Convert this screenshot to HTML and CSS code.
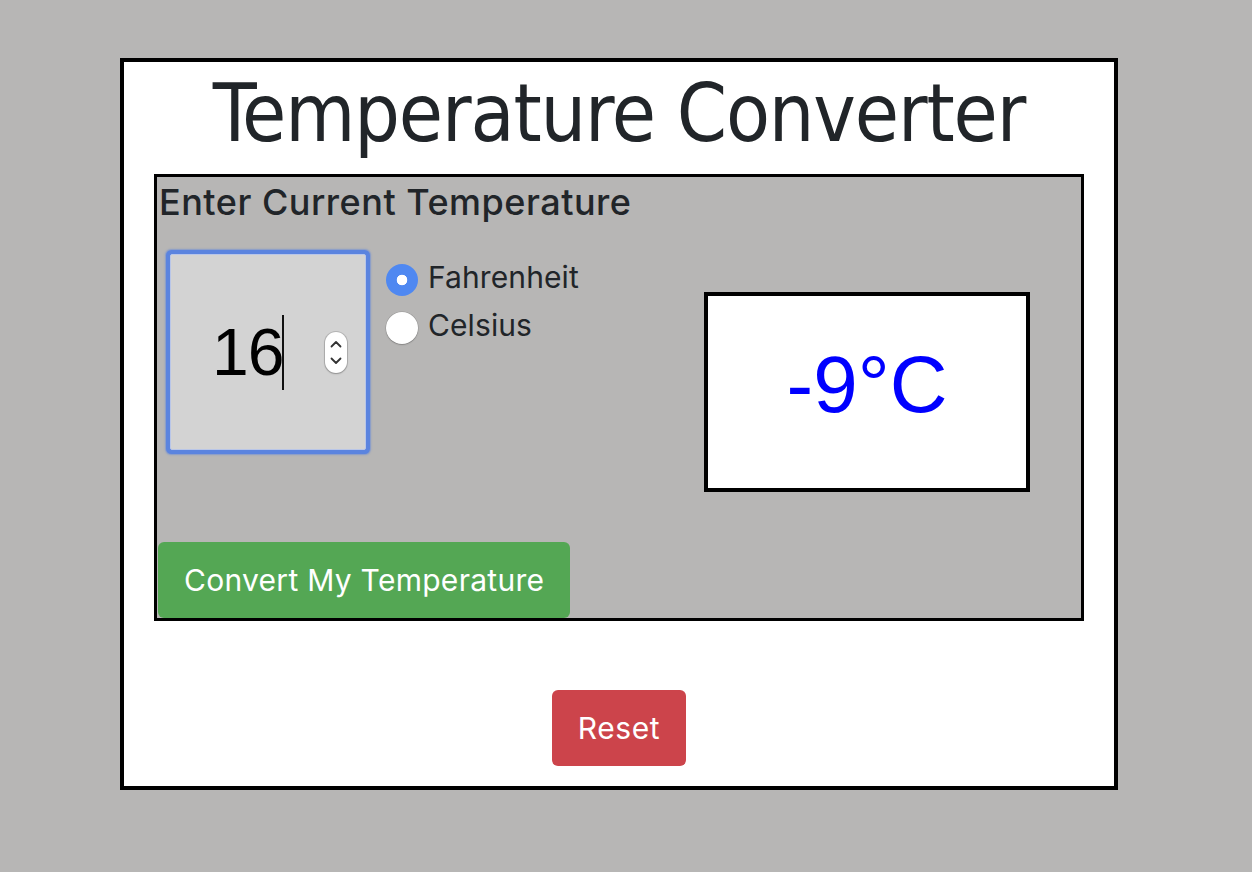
FILE: index.html
```html
<!DOCTYPE html>
<html lang="en">
<head>
<meta charset="utf-8">
<title>Temperature Converter</title>
<link rel="stylesheet" href="styles.css">
</head>
<body>
<main class="app">
  <h1 class="title">Temperature Converter</h1>
  <section class="panel">
    <h4 class="panel-title">Enter Current Temperature</h4>
    <div class="row">
      <div class="num">
        <span class="num-value">16</span><span class="caret"></span>
        <span class="spin">
          <svg width="22" height="41" viewBox="0 0 22 41" aria-hidden="true">
            <polyline points="6.5,14.5 11,10 15.5,14.5" fill="none" stroke="#333" stroke-width="1.8" stroke-linecap="round" stroke-linejoin="round"/>
            <polyline points="6.5,26.5 11,31 15.5,26.5" fill="none" stroke="#333" stroke-width="1.8" stroke-linecap="round" stroke-linejoin="round"/>
          </svg>
        </span>
      </div>
      <div class="radios">
        <label class="radio-opt"><input class="radio" type="radio" name="unit" checked><span class="radio-text">Fahrenheit</span></label>
        <label class="radio-opt"><input class="radio" type="radio" name="unit"><span class="radio-text">Celsius</span></label>
      </div>
      <div class="result">-9°C</div>
    </div>
    <button class="btn btn-convert" type="button">Convert My Temperature</button>
  </section>
  <div class="reset-row">
    <button class="btn btn-reset" type="button">Reset</button>
  </div>
</main>
</body>
</html>
```

FILE: styles.css
```css
html, body {
  margin: 0;
  background: #b7b6b5;
}

body {
  padding: 58px 0 0 120px;
  min-height: 872px;
  box-sizing: border-box;
  font-family: "Inter", "Roboto", sans-serif;
  color: #212529;
}

.app {
  width: 998px;
  height: 732px;
  box-sizing: border-box;
  border: 4px solid #000;
  background: #fff;
  display: flex;
  flex-direction: column;
}

.title {
  margin: 0 0 8px;
  font-family: "DejaVu Sans Condensed", "DejaVu Sans", sans-serif;
  font-weight: 400;
  font-size: 80px;
  letter-spacing: -1.1px;
  line-height: 104px;
  text-align: center;
  color: #212529;
}

.panel {
  margin: 0 30px;
  height: 447px;
  box-sizing: border-box;
  border: 3px solid #000;
  background: #b7b6b5;
  display: flex;
  flex-direction: column;
}

.panel-title {
  margin: 4px 0 0 2px;
  font-family: "Inter", sans-serif;
  font-weight: 500;
  font-size: 36px;
  line-height: 43px;
  letter-spacing: 0.5px;
  color: #212529;
}

.row {
  display: flex;
  align-items: flex-start;
  margin-top: 30px;
}

.num {
  margin-left: 13px;
  width: 196px;
  height: 196px;
  box-sizing: border-box;
  border: 1px solid #b9c6e8;
  border-radius: 2px;
  background: #d3d3d3;
  box-shadow: 0 0 0 4px #5b84df, 0 0 1.5px 5px rgba(91, 132, 223, 0.55);
  padding-left: 41px;
  display: flex;
  align-items: center;
}

.num-value {
  font-family: "Liberation Sans", Arial, sans-serif;
  font-size: 66px;
  letter-spacing: -1px;
  line-height: 1;
  color: #000;
}

.caret {
  margin-left: -1px;
  width: 2px;
  height: 75px;
  background: #111;
}

.spin {
  margin-left: 41px;
  width: 22px;
  height: 41px;
  border-radius: 11px;
  background: #fff;
  box-shadow: 0 0 0 1px rgba(0, 0, 0, 0.14), 0 1px 2px rgba(0, 0, 0, 0.22);
  display: flex;
}

.radios {
  margin-left: 20px;
  margin-top: 2px;
  display: flex;
  flex-direction: column;
}

.radio-opt {
  display: flex;
  align-items: center;
  gap: 10px;
  height: 48px;
  font-family: "Inter", sans-serif;
  font-size: 30px;
  color: #212529;
}

.radio-text {
  padding-bottom: 6px;
  letter-spacing: 0.1px;
}

.radio {
  -webkit-appearance: none;
  appearance: none;
  margin: 0;
  width: 32px;
  height: 32px;
  border-radius: 50%;
  background: #fff;
  box-shadow: 0 0 0 0.5px rgba(0, 0, 0, 0.16), 0 1px 1.5px rgba(0, 0, 0, 0.2);
}

.radio:checked {
  background: radial-gradient(circle, #fff 0 5px, #4f88f1 5.6px);
  box-shadow: none;
}

.result {
  margin-left: auto;
  margin-right: 51px;
  margin-top: 38px;
  width: 326px;
  height: 200px;
  box-sizing: border-box;
  border: 4px solid #000;
  background: #fff;
  padding-top: 44px;
  text-align: center;
  font-family: "Liberation Sans", Arial, sans-serif;
  font-size: 80px;
  line-height: 90px;
  color: #0000ff;
}

.btn {
  height: 76px;
  padding: 0 26px;
  border: none;
  border-radius: 6px;
  color: #fff;
  font-family: "Inter", sans-serif;
  font-size: 30px;
  line-height: 76px;
}

.btn-convert {
  margin-top: auto;
  margin-left: 1px;
  align-self: flex-start;
  background: #54a754;
  letter-spacing: 0.28px;
}

.reset-row {
  display: flex;
  justify-content: center;
  margin-top: 69px;
}

.btn-reset {
  background: #cc444b;
  letter-spacing: 0.6px;
}
```
